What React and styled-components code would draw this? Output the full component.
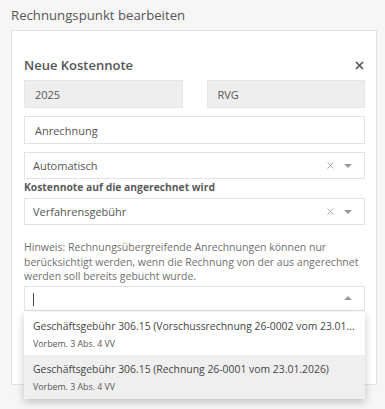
import React from "react";
import styled, { createGlobalStyle } from "styled-components";

const Global = createGlobalStyle`
  html, body { margin: 0; padding: 0; background: #f6f6f7; }
  body { font-family: "Open Sans", "Noto Sans", sans-serif; color: #555; }
  * { box-sizing: border-box; }
`;

const Page = styled.div`
  padding: 6px 8px 0 11px;
  width: 385px;
  height: 409px;
  overflow: hidden;
`;

const PageTitle = styled.h1`
  margin: 0 0 5px 0;
  font-size: 13.2px;
  font-weight: 400;
  line-height: 19px;
  color: #555;
`;

const Card = styled.div`
  width: 366px;
  height: 355px;
  background: #fff;
  border: 1px solid #e3e3e6;
  padding: 22px 11px 0 12px;
  display: flex;
  flex-direction: column;
`;

const Header = styled.div`
  display: flex;
  align-items: center;
  justify-content: space-between;
  height: 24px;
  margin-bottom: 3px;
`;

const Heading = styled.h2`
  margin: 0;
  font-size: 13px;
  font-weight: 600;
  color: #555;
`;

const Close = styled.button`
  border: none;
  background: none;
  padding: 0;
  margin-right: 1px;
  width: 9px;
  height: 9px;
  display: flex;
  cursor: pointer;
`;

const Row = styled.div`
  display: grid;
  grid-template-columns: 1fr 1fr;
  column-gap: 24px;
  margin-bottom: 8px;
`;

const Field = styled.div`
  height: ${(p) => p.$h || 28}px;
  border: 1px solid ${(p) => (p.$disabled ? "#e6e6e6" : "#e3e3e3")};
  background: ${(p) => (p.$disabled ? "#eeeeee" : "#fff")};
  display: flex;
  align-items: center;
  padding-left: ${(p) => p.$pl || 10}px;
  padding-right: 12px;
  font-size: 11px;
  color: #555;
  margin-bottom: ${(p) => p.$mb ?? 8}px;
  position: relative;
`;

const Value = styled.span`
  flex: 1;
  white-space: nowrap;
  overflow: hidden;
`;

const Icons = styled.div`
  display: flex;
  align-items: center;
  gap: 10px;
`;

const Label = styled.div`
  font-size: 10.3px;
  font-weight: 700;
  color: #5a5a5a;
  line-height: 14px;
  margin: 1px 0 4px;
`;

const Hint = styled.p`
  margin: 15px 0 2px;
  font-size: 10.5px;
  line-height: 14.5px;
  color: #6f6f6f;
`;

const Cursor = styled.span`
  display: inline-block;
  width: 1px;
  height: 13px;
  background: #444;
  vertical-align: middle;
`;

const Menu = styled.div`
  position: absolute;
  left: -1px;
  right: -1px;
  top: 25px;
  background: #fff;
  box-shadow: 0 3px 8px rgba(0, 0, 0, 0.22);
  z-index: 2;
`;

const Option = styled.div`
  height: ${(p) => p.$h}px;
  padding: 6px 10px 0 9px;
  background: ${(p) => (p.$active ? "#efefef" : "#fff")};
  display: flex;
  flex-direction: column;
  gap: 2px;
`;

const OptTitle = styled.div`
  font-size: 10.4px;
  line-height: 17px;
  color: #444;
  white-space: nowrap;
  overflow: hidden;
  text-overflow: ellipsis;
`;

const OptSub = styled.div`
  font-size: 8.8px;
  line-height: 14px;
  color: #555;
`;

const ClearIcon = () => (
  <svg width="7" height="7" viewBox="0 0 7 7">
    <path d="M0.5 0.5L6.5 6.5M6.5 0.5L0.5 6.5" stroke="#aaa" strokeWidth="1" />
  </svg>
);

const Caret = ({ up }) => (
  <svg width="8" height="4" viewBox="0 0 8 4">
    <path d={up ? "M0 4L4 0L8 4Z" : "M0 0L8 0L4 4Z"} fill="#999" />
  </svg>
);

export default function App() {
  return (
    <>
      <Global />
      <Page>
        <PageTitle>Rechnungspunkt bearbeiten</PageTitle>
        <Card>
          <Header>
            <Heading>Neue Kostennote</Heading>
            <Close aria-label="Schließen">
              <svg width="9" height="9" viewBox="0 0 9 9">
                <path d="M1 1L8 8M8 1L1 8" stroke="#555" strokeWidth="1.7" />
              </svg>
            </Close>
          </Header>
          <Row>
            <Field $disabled $mb={0}>
              <Value>2025</Value>
            </Field>
            <Field $disabled $mb={0}>
              <Value>RVG</Value>
            </Field>
          </Row>
          <Field $pl={10}>
            <Value>Anrechnung</Value>
          </Field>
          <Field $h={27} $pl={8} $mb={0}>
            <Value>Automatisch</Value>
            <Icons>
              <ClearIcon />
              <Caret />
            </Icons>
          </Field>
          <Label>Kostennote auf die angerechnet wird</Label>
          <Field $h={27} $pl={8} $mb={0}>
            <Value>Verfahrensgebühr</Value>
            <Icons>
              <ClearIcon />
              <Caret />
            </Icons>
          </Field>
          <Hint>
            Hinweis: Rechnungsübergreifende Anrechnungen können nur
            berücksichtigt werden, wenn die Rechnung von der aus angerechnet
            werden soll bereits gebucht wurde.
          </Hint>
          <Field $h={25} $pl={8} $mb={0}>
            <Value>
              <Cursor />
            </Value>
            <Caret up />
            <Menu>
              <Option $h={43}>
                <OptTitle>
                  Geschäftsgebühr 306.15 (Vorschussrechnung 26-0002 vom 23.01.2026)
                </OptTitle>
                <OptSub>Vorbem. 3 Abs. 4 VV</OptSub>
              </Option>
              <Option $h={44} $active>
                <OptTitle>
                  Geschäftsgebühr 306.15 (Rechnung 26-0001 vom 23.01.2026)
                </OptTitle>
                <OptSub>Vorbem. 3 Abs. 4 VV</OptSub>
              </Option>
            </Menu>
          </Field>
        </Card>
      </Page>
    </>
  );
}
